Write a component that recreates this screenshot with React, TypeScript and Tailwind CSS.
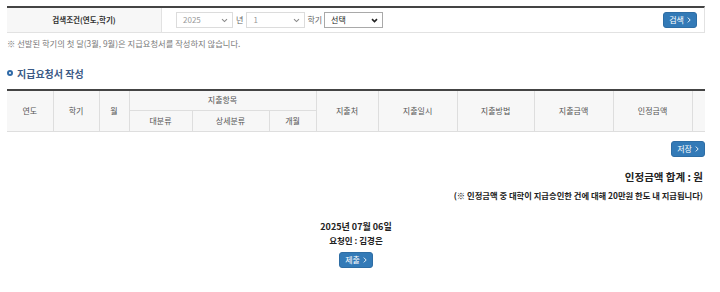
import clsx from "clsx";

function Chevron({ dark }: { dark?: boolean }) {
  return (
    <svg width="7" height="5" viewBox="0 0 7 5" className="shrink-0">
      <path
        d="M1 1.2l2.5 2.4L6 1.2"
        fill="none"
        stroke={dark ? "#222" : "#8a8a8a"}
        strokeWidth={dark ? 1.6 : 1.1}
      />
    </svg>
  );
}

function FakeSelect({ value, className, disabled }: { value: string; className: string; disabled?: boolean }) {
  return (
    <div
      className={clsx(
        "flex h-[16px] items-center justify-between border pl-[6px] pr-[4px] text-[8px]",
        disabled ? "border-[#dcdcdc] text-[#9a9a9a]" : "border-[#a9a9a9] text-[#222]",
        className
      )}
    >
      <span>{value}</span>
      <Chevron dark={!disabled} />
    </div>
  );
}

function BlueButton({ label }: { label: string }) {
  return (
    <button className="flex h-[16px] w-[34px] items-center justify-center gap-[3px] rounded-[3px] border border-[#2e6da4] bg-[#337ab7] text-[8px] text-white">
      <span>{label}</span>
      <svg width="4" height="6" viewBox="0 0 4 6">
        <path d="M0.8 0.6L3.2 3L0.8 5.4" fill="none" stroke="#fff" strokeWidth="0.9" />
      </svg>
    </button>
  );
}

const th = "border border-[#dedede] bg-[#f7f7f7] text-[8px] font-normal text-[#555]";

export default function App() {
  return (
    <div className="min-h-[292px] bg-white font-['Noto_Sans_CJK_KR',sans-serif] text-[#222]">
      <div className="ml-[7px] w-[698px] pt-[6px]">
        {/* 검색조건 */}
        <div className="flex h-[27px] border-t-2 border-b border-r border-t-[#444] border-b-[#e2e2e2] border-r-[#e2e2e2]">
          <div className="flex w-[155px] items-center justify-center border-r border-[#e2e2e2] bg-[#f7f7f7] text-[7.5px] font-bold text-[#333]">
            검색조건(연도,학기)
          </div>
          <div className="flex flex-1 items-center pl-[14px] pr-[7px]">
            <FakeSelect value="2025" className="w-[57px]" disabled />
            <span className="mx-[3px] text-[8px] text-[#666]">년</span>
            <FakeSelect value="1" className="w-[59px]" disabled />
            <span className="mx-[2px] text-[8px] text-[#666]">학기</span>
            <FakeSelect value="선택" className="w-[59px]" />
            <div className="ml-auto">
              <BlueButton label="검색" />
            </div>
          </div>
        </div>

        <p className="mt-[5px] text-[8.3px] leading-[11px] text-[#7a7a7a]">
          ※ 선발된 학기의 첫 달(3월, 9월)은 지급요청서를 작성하지 않습니다.
        </p>

        {/* 지급요청서 작성 */}
        <div className="mt-[17px] flex h-[14px] items-center gap-[4px]">
          <span className="h-[6px] w-[6px] rounded-full border-2 border-[#2f6aa8]" />
          <h2 className="text-[10px] font-bold text-[#3b5a86]">지급요청서 작성</h2>
        </div>

        <table className="mt-[9px] w-[698px] table-fixed border-collapse border-t-2 border-t-[#444] text-center">
          <colgroup>
            <col className="w-[46px]" />
            <col className="w-[46px]" />
            <col className="w-[30px]" />
            <col className="w-[63px]" />
            <col className="w-[77px]" />
            <col className="w-[47px]" />
            <col className="w-[62px]" />
            <col className="w-[79px]" />
            <col className="w-[77px]" />
            <col className="w-[79px]" />
            <col className="w-[79px]" />
            <col className="w-[13px]" />
          </colgroup>
          <thead>
            <tr className="h-[20px]">
              <th rowSpan={2} className={clsx(th, "border-l-0")}>연도</th>
              <th rowSpan={2} className={th}>학기</th>
              <th rowSpan={2} className={th}>월</th>
              <th colSpan={3} className={th}>지출항목</th>
              <th rowSpan={2} className={th}>지출처</th>
              <th rowSpan={2} className={th}>지출일시</th>
              <th rowSpan={2} className={th}>지출방법</th>
              <th rowSpan={2} className={th}>지출금액</th>
              <th rowSpan={2} className={th}>인정금액</th>
              <th rowSpan={2} className={clsx(th, "border-r-0")}></th>
            </tr>
            <tr className="h-[21px]">
              <th className={th}>대분류</th>
              <th className={th}>상세분류</th>
              <th className={th}>개월</th>
            </tr>
          </thead>
        </table>

        <div className="mt-[9px] flex justify-end">
          <BlueButton label="저장" />
        </div>

        <p className="mt-[13px] pr-[2px] text-right text-[10.5px] font-bold leading-[14px] text-[#222]">
          인정금액 합계 : 원
        </p>
        <p className="mt-[6px] pr-[2px] text-right text-[8.3px] font-bold leading-[11px] text-[#222]">
          (※ 인정금액 중 대학이 지급승인한 건에 대해 20만원 한도 내 지급됩니다)
        </p>

        <div className="mt-[20px] flex flex-col items-center">
          <p className="text-[9px] font-bold leading-[12px]">2025년 07월 06일</p>
          <p className="mt-[1px] text-[8.5px] font-bold leading-[12px]">요청인 : 김경은</p>
          <div className="mt-[6px]">
            <BlueButton label="제출" />
          </div>
        </div>
      </div>
    </div>
  );
}
